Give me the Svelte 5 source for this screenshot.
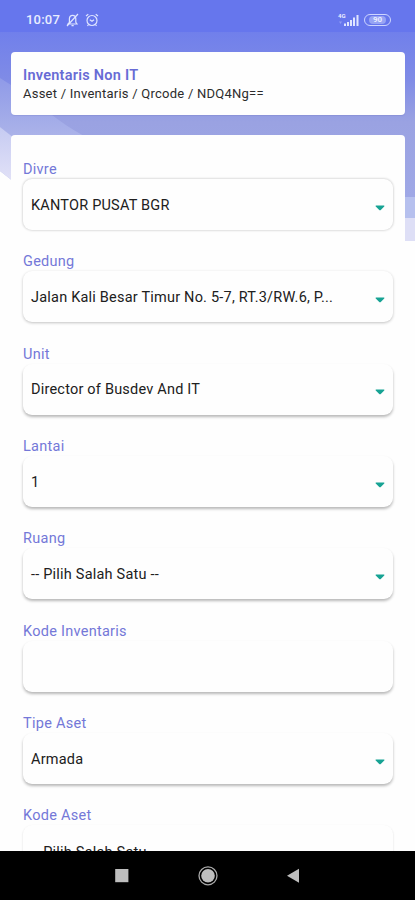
<script lang="ts">
    type Field = { label: string; value: string; select: boolean };

    const fields: Field[] = [
        { label: "Divre", value: "KANTOR PUSAT BGR", select: true },
        { label: "Gedung", value: "Jalan Kali Besar Timur No. 5-7, RT.3/RW.6, P...", select: true },
        { label: "Unit", value: "Director of Busdev And IT", select: true },
        { label: "Lantai", value: "1", select: true },
        { label: "Ruang", value: "-- Pilih Salah Satu --", select: true },
        { label: "Kode Inventaris", value: "", select: false },
        { label: "Tipe Aset", value: "Armada", select: true },
        { label: "Kode Aset", value: "-- Pilih Salah Satu --", select: true },
    ];
</script>

<div class="screen">
    <svg class="backdrop" viewBox="0 0 415 250" aria-hidden="true">
        <defs>
            <linearGradient id="sky" gradientUnits="userSpaceOnUse" x1="0" y1="0" x2="0" y2="197">
                <stop offset="0" stop-color="#6676ed" />
                <stop offset="0.17" stop-color="#7180eb" />
                <stop offset="0.4" stop-color="#7f8be6" />
                <stop offset="0.62" stop-color="#9aa2e2" />
                <stop offset="1" stop-color="#9fa8e6" />
            </linearGradient>
            <linearGradient id="wave" gradientUnits="userSpaceOnUse" x1="0" y1="78" x2="0" y2="136">
                <stop offset="0" stop-color="#8f9ae8" />
                <stop offset="1" stop-color="#abb3e9" />
            </linearGradient>
            <linearGradient id="foam" gradientUnits="userSpaceOnUse" x1="0" y1="127" x2="0" y2="180">
                <stop offset="0" stop-color="#c6cbf2" />
                <stop offset="1" stop-color="#e1e1f7" />
            </linearGradient>
        </defs>
        <rect width="415" height="197" fill="url(#sky)" />
        <path d="M400 197H415V218H400Z" fill="#b6c0ee" />
        <path d="M400 218H415V241H400Z" fill="#dedff6" />
        <path d="M0 78L11 85L52 115Q66 126 84 136H11L0 127Z" fill="url(#wave)" />
        <path d="M0 127L14 138V182L0 171Z" fill="url(#foam)" />
        <path d="M0 171L14 182V197H0Z" fill="#fefefe" />
    </svg>

    <div class="status">
        <span class="time">10:07</span>
        <svg class="bell" width="13" height="14" viewBox="0 0 13 14">
            <path d="M2 11H11L9.8 9.3V5.8C9.8 3.6 8.5 2.3 6.6 2.3S3.4 3.6 3.4 5.8V9.3L2 11ZM5.5 12.7H7.7M1 13L12 1" />
        </svg>
        <svg class="alarm" width="14" height="14" viewBox="0 0 14 14">
            <circle cx="7" cy="7.5" r="5" />
            <path d="M1 3L3.3 1.2M13 3L10.7 1.2M3.5 11.5L2.5 13M10.5 11.5L11.5 13M4.8 6.8L7 8.3L9 6.8" />
        </svg>
        <div class="signal">
            <span class="network">4G</span>
            <svg width="22" height="14" viewBox="0 0 22 14">
                <path d="M6 13V10.5H8V13ZM9 13V9H11V13ZM12 13V7H14V13ZM15 13V4.5H17V13ZM18.5 13V2H20.5V13Z" />
                <path d="M1 8.5H4L2.5 11Z" opacity="0.35" />
            </svg>
        </div>
        <div class="battery"><span>90</span></div>
    </div>

    <main>
        <section class="card heading">
            <h1>Inventaris Non IT</h1>
            <p>Asset / Inventaris / Qrcode / NDQ4Ng==</p>
        </section>

        <section class="card form">
            {#each fields as field, i}
                <div class="field">
                    <span class="label">{field.label}</span>
                    <div class="input" class:flat={i === 0} class:soft={i === 1} class:last={i === fields.length - 1}>
                        <span class="value">{field.value}</span>
                        {#if field.select}
                            <svg width="10" height="6" viewBox="0 0 10 6">
                                <path d="M0.8 0.4H9.2Q9.8 1 9 1.8L6 4.8Q5 5.8 4 4.8L1 1.8Q0.2 1 0.8 0.4Z" />
                            </svg>
                        {/if}
                    </div>
                </div>
            {/each}
        </section>
    </main>

    <nav>
        <svg width="415" height="49" viewBox="0 0 415 49">
            <rect x="115.2" y="18" width="13.2" height="13.2" />
            <circle cx="208" cy="24.8" r="6.8" />
            <circle class="ring" cx="208" cy="24.8" r="9" />
            <path d="M287 24.8L299 17.8V31.8Z" />
        </svg>
    </nav>
</div>

<style>
    :global(body) {
        margin: 0;
        background: #fefefe;
    }

    .screen {
        position: relative;
        display: flex;
        flex-direction: column;
        width: 415px;
        height: 900px;
        overflow: hidden;
        background: #fefefe;
        font-family: Roboto, "Liberation Sans", sans-serif;
    }

    .backdrop {
        position: absolute;
        top: 0;
        left: 0;
        width: 415px;
        height: 250px;
    }

    .status {
        position: relative;
        display: flex;
        flex: none;
        align-items: center;
        box-sizing: border-box;
        height: 32px;
        padding: 7px 24px 0 26px;
        background: #6676ed;
        color: #e9edff;
    }

    .time {
        width: 40px;
        font-size: 13px;
        font-weight: 500;
        letter-spacing: 0.2px;
    }

    .bell,
    .alarm {
        fill: none;
        stroke: #dfe5ff;
        stroke-width: 1.2;
    }

    .alarm {
        margin-left: 6px;
    }

    .signal {
        position: relative;
        display: flex;
        margin-left: auto;
        fill: #dfe5ff;
    }

    .network {
        position: absolute;
        top: 0;
        left: 0;
        font-size: 6px;
        font-weight: 700;
        line-height: 6px;
    }

    .battery {
        display: flex;
        align-items: center;
        justify-content: center;
        box-sizing: border-box;
        width: 27px;
        height: 12px;
        margin-left: 4px;
        border: 1.5px solid #cdd5ff;
        border-radius: 7px;
    }

    .battery span {
        padding: 0 4px;
        border-radius: 4px;
        background: #97a4f4;
        font-size: 8px;
        font-weight: 700;
        line-height: 8px;
    }

    main {
        position: relative;
        flex: 1;
        min-height: 0;
        padding: 20px 10px 0 11px;
        overflow: hidden;
    }

    .card {
        box-sizing: border-box;
        border-radius: 4px;
        background: #fefefe;
    }

    .heading {
        height: 63px;
        padding: 14px 12px 0;
        box-shadow: 0 1px 1px rgba(70, 80, 160, 0.15);
    }

    h1 {
        margin: 0;
        color: #686bd5;
        font-size: 14.5px;
        font-weight: 600;
        line-height: 19px;
        letter-spacing: 0.25px;
    }

    p {
        margin: 0;
        color: #2c2c2c;
        font-size: 13px;
        line-height: 18px;
        letter-spacing: 0.24px;
    }

    .form {
        margin-top: 20px;
        padding: 24px 12px 0;
    }

    .field {
        height: 92.35px;
    }

    .label {
        display: block;
        box-sizing: border-box;
        height: 20px;
        padding-top: 1px;
        color: #7478d8;
        font-size: 14.5px;
        line-height: 20px;
        letter-spacing: 0.27px;
    }

    .input {
        display: flex;
        align-items: center;
        justify-content: space-between;
        box-sizing: border-box;
        height: 51px;
        padding: 0 8px;
        border-radius: 9px;
        background: #fefefe;
        box-shadow: 0 2px 3px rgba(0, 0, 0, 0.28);
    }

    .input.flat {
        box-shadow: 0 0 2px 1px rgba(0, 0, 0, 0.13);
    }

    .input.soft {
        box-shadow: 0 1px 3px rgba(0, 0, 0, 0.24);
    }

    .input.last {
        box-shadow: 0 1px 2px rgba(0, 0, 0, 0.16);
    }

    .value {
        padding-top: 2px;
        color: #202020;
        font-size: 14.5px;
        line-height: 20px;
        letter-spacing: 0.21px;
    }

    .last .value {
        padding-top: 4px;
    }

    .input svg {
        margin-top: 6px;
        fill: #17a394;
    }

    nav {
        position: relative;
        flex: none;
        height: 49px;
        background: #000;
    }

    nav svg {
        display: block;
        fill: #bebebe;
    }

    .ring {
        fill: none;
        stroke: #aaa;
        stroke-width: 1.3;
    }
</style>
